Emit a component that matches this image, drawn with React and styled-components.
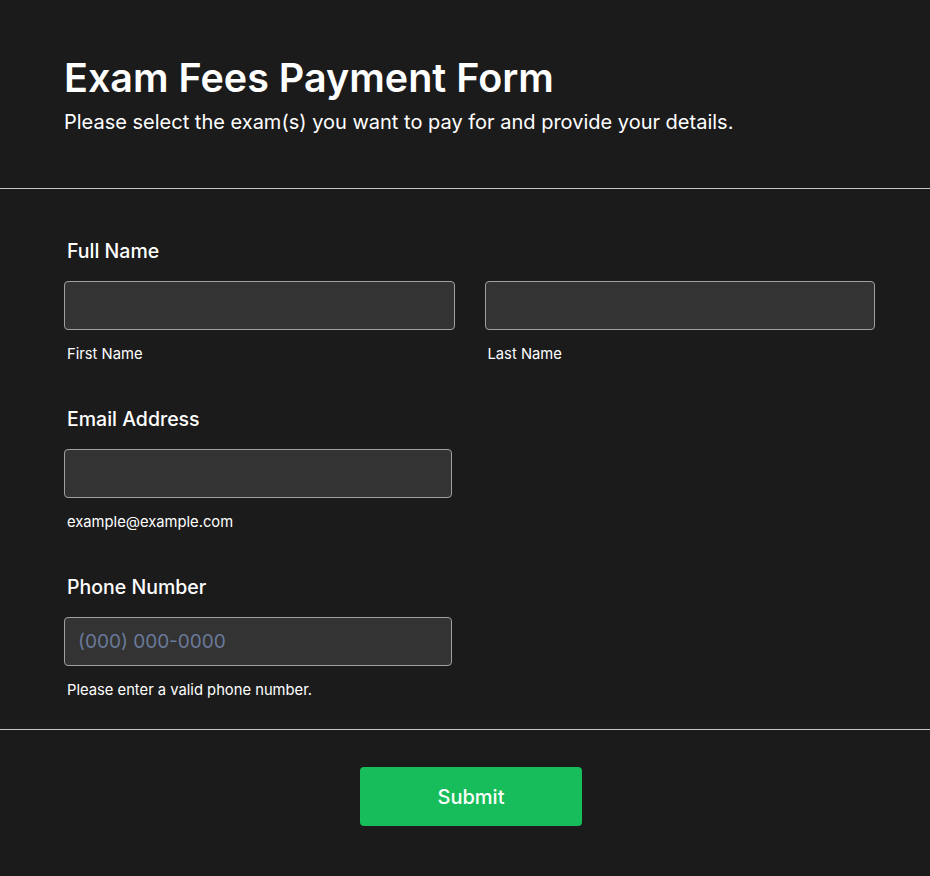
import React from 'react';
import styled, { createGlobalStyle } from 'styled-components';

const GlobalStyle = createGlobalStyle`
  body {
    margin: 0;
    background: #1b1b1b;
    font-family: Inter, "Noto Sans", sans-serif;
    color: #fff;
  }
`

export default function App() {
  return (
    <Page>
      <GlobalStyle />
      <Header>
        <Title>Exam Fees Payment Form</Title>
        <Subtitle>Please select the exam(s) you want to pay for and provide your details.</Subtitle>
      </Header>

      <Body>
        <Field>
          <Label>Full Name</Label>
          <Row>
            <Column>
              <Input type='text' />
              <Hint>First Name</Hint>
            </Column>
            <Column>
              <Input type='text' />
              <Hint>Last Name</Hint>
            </Column>
          </Row>
        </Field>

        <Field>
          <Label>Email Address</Label>
          <Column narrow>
            <Input type='email' />
            <Hint>example@example.com</Hint>
          </Column>
        </Field>

        <Field>
          <Label>Phone Number</Label>
          <Column narrow>
            <Input type='tel' placeholder='(000) 000-0000' />
            <Hint>Please enter a valid phone number.</Hint>
          </Column>
        </Field>
      </Body>

      <Footer>
        <SubmitButton type='button'>Submit</SubmitButton>
      </Footer>
    </Page>
  )
}

const Page = styled.div `
  width: 930px;
  min-height: 876px;
  background: #1b1b1b;
`

const Header = styled.div `
  height: 189px;
  padding: 54px 64px 0;
  box-sizing: border-box;
  border-bottom: 1px solid #c8c8c8;
`

const Title = styled.h1 `
  margin: 0;
  font-size: 39.5px;
  font-weight: 600;
  line-height: 48px;
`

const Subtitle = styled.p `
  margin: 6px 0 0;
  font-size: 20px;
  line-height: 28px;
  font-weight: 400;
`

const Body = styled.div `
  padding: 48px 55px 29px 64px;
  display: flex;
  flex-direction: column;
  gap: 41px;
  border-bottom: 1px solid #c8c8c8;
`

const Field = styled.div `
  display: flex;
  flex-direction: column;
`

const Label = styled.label `
  padding-left: 3px;
  font-size: 19.5px;
  font-weight: 500;
  line-height: 28px;
  margin-bottom: 16px;
`

const Row = styled.div `
  display: grid;
  grid-template-columns: 1fr 1fr;
  gap: 30px;
`

const Column = styled.div `
  display: flex;
  flex-direction: column;
  width: ${props => props.narrow ? '388px' : 'auto'};
`

const Input = styled.input `
  height: 49px;
  box-sizing: border-box;
  background: #333333;
  border: 1px solid #a0a0a4;
  border-radius: 4px;
  padding: 0 13px;
  font-family: Inter, "Noto Sans", sans-serif;
  font-size: 19px;
  color: #fff;
  outline: none;

  &::placeholder {
    color: #6a7a9a;
  }
`

const Hint = styled.span `
  padding-left: 3px;
  margin-top: 14px;
  font-size: 14.75px;
  line-height: 20px;
`

const Footer = styled.div `
  display: flex;
  justify-content: center;
  padding: 37px 0 0 12px;
`

const SubmitButton = styled.button `
  width: 222px;
  height: 59px;
  background: #18bd5b;
  border: none;
  border-radius: 4px;
  color: #fff;
  font-family: Inter, "Noto Sans", sans-serif;
  font-size: 20px;
  font-weight: 500;
  cursor: pointer;
`
